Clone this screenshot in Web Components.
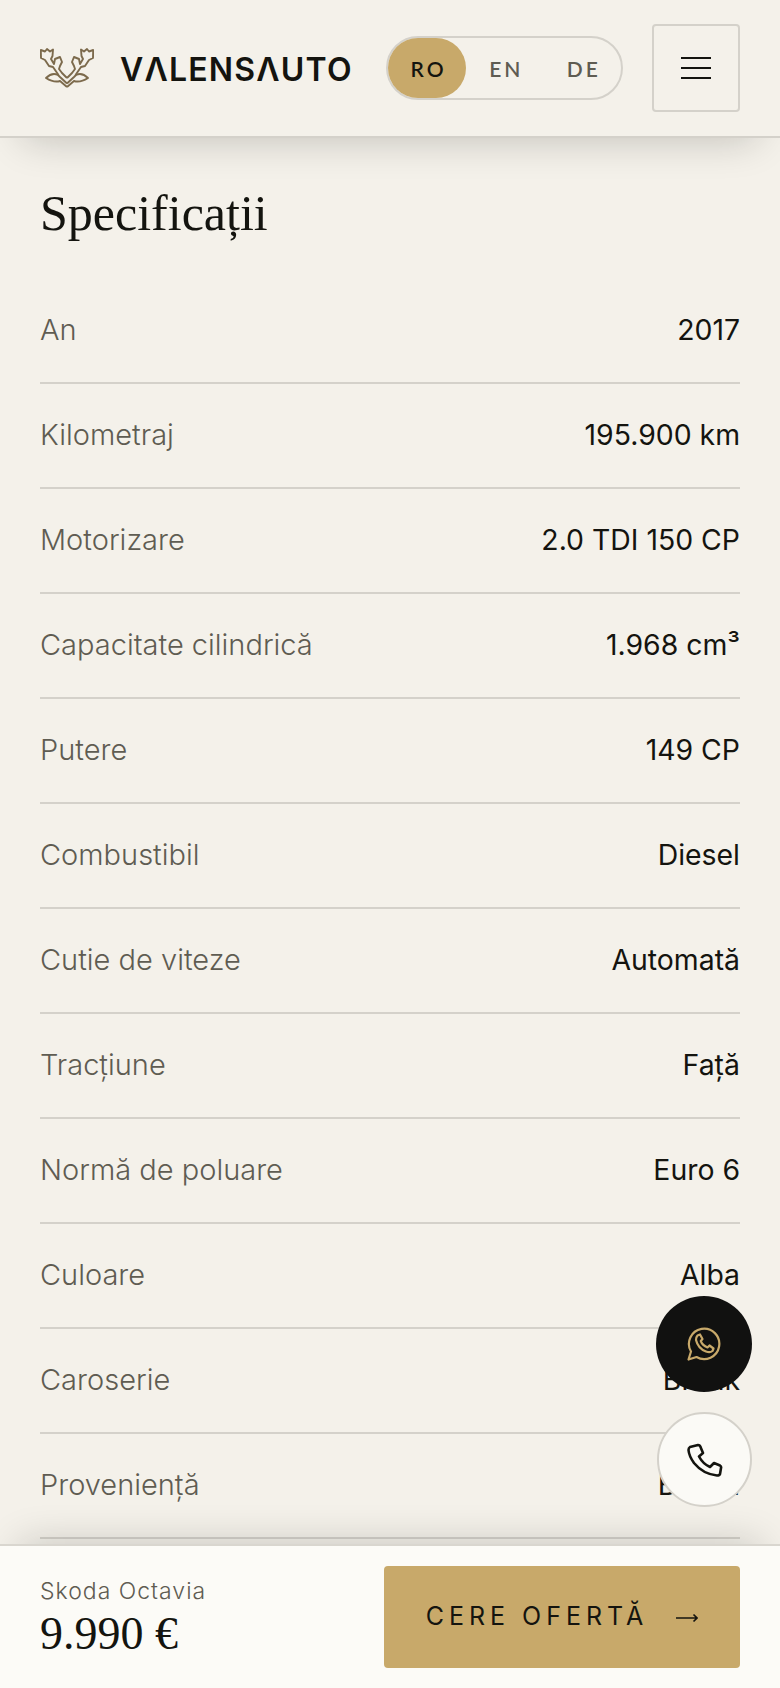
<!DOCTYPE html>
<html lang="ro">
<head>
<meta charset="utf-8">
<title>Specificații</title>
<style>
  html, body { margin: 0; height: 100%; }
  body {
    background: #f4f1ea;
    color: #14140f;
    font-family: "Inter", "Liberation Sans", sans-serif;
    overflow: hidden;
  }
  va-page { height: 100vh; }
</style>
</head>
<body>
<va-page>
  <va-header slot="header"></va-header>
  <va-specs title="Specificații">
    <va-spec label="An" value="2017"></va-spec>
    <va-spec label="Kilometraj" value="195.900 km"></va-spec>
    <va-spec label="Motorizare" value="2.0 TDI 150 CP"></va-spec>
    <va-spec label="Capacitate cilindrică" value="1.968 cm³"></va-spec>
    <va-spec label="Putere" value="149 CP"></va-spec>
    <va-spec label="Combustibil" value="Diesel"></va-spec>
    <va-spec label="Cutie de viteze" value="Automată"></va-spec>
    <va-spec label="Tracțiune" value="Față"></va-spec>
    <va-spec label="Normă de poluare" value="Euro 6"></va-spec>
    <va-spec label="Culoare" value="Alba"></va-spec>
    <va-spec label="Caroserie" value="Break"></va-spec>
    <va-spec label="Proveniență" value="Belgia"></va-spec>
  </va-specs>
  <va-contact slot="float"></va-contact>
  <va-offer-bar slot="footer" name="Skoda Octavia" price="9.990 €"></va-offer-bar>
</va-page>

<script>
class VaPage extends HTMLElement {
  constructor() {
    super();
    this.attachShadow({mode: 'open'}).innerHTML = `
      <style>
        :host { display: flex; flex-direction: column; position: relative; overflow: hidden; }
        main { flex: 1; min-height: 0; overflow: hidden; }
      </style>
      <slot name="header"></slot>
      <main><slot></slot></main>
      <slot name="float"></slot>
      <slot name="footer"></slot>
    `;
  }
}

class VaHeader extends HTMLElement {
  constructor() {
    super();
    this.attachShadow({mode: 'open'}).innerHTML = `
      <style>
        :host {
          display: flex;
          align-items: center;
          flex: none;
          height: 138px;
          box-sizing: border-box;
          padding: 0 40px;
          background: #f4f1ea;
          border-bottom: 2px solid #d4d1ca;
          box-shadow: 0 24px 40px -24px rgba(20, 20, 15, .24);
          position: relative;
          z-index: 2;
        }
        svg.mark { width: 54px; height: 40px; flex: none; }
        .word {
          margin-left: 26px;
          padding-top: 2px;
          font: 600 32px "Inter", sans-serif;
          letter-spacing: 1.2px;
          color: #14140f;
        }
        .langs {
          margin-left: auto;
          display: flex;
          align-items: center;
          box-sizing: border-box;
          width: 237px;
          height: 64px;
          border: 2px solid #d4d1ca;
          border-radius: 32px;
        }
        .langs span {
          flex: 1;
          height: 100%;
          display: flex;
          align-items: center;
          justify-content: center;
          box-sizing: border-box;
          padding-left: 3px;
          font: 600 21px "Lato", sans-serif;
          letter-spacing: 3px;
          color: #5f5c52;
          border-radius: 30px;
        }
        .langs span.on { flex: none; width: 78px; background: #c8a96a; color: #14140f; }
        button {
          margin-left: 29px;
          width: 88px;
          height: 88px;
          background: none;
          border: 2px solid #d4d1ca;
          border-radius: 4px;
          padding: 0;
          display: flex;
          flex-direction: column;
          align-items: center;
          justify-content: center;
          gap: 8px;
        }
        button i { display: block; width: 30px; height: 2px; background: #14140f; }
      </style>
      <svg class="mark" viewBox="0 0 54 40" fill="none" stroke="#7c6a4c" stroke-width="1.9" stroke-linejoin="round">
        <g>
          <path d="M27 39 L20 33 Q14 35 6 30 Q12 24 18 27 L20 29 L27 35.5"/>
          <path d="M18.5 27 L13 19 L9 18 L5 12 L1 10 L0.8 2 L5 3.5 L7 1 L10 3.5 L13 1.5 L12.5 8 L11 11 L14 16 L15 11 L20 9 L22 14 L20 18 L19 21 L22 25 L27 30"/>
        </g>
        <g transform="matrix(-1 0 0 1 54 0)">
          <path d="M27 39 L20 33 Q14 35 6 30 Q12 24 18 27 L20 29 L27 35.5"/>
          <path d="M18.5 27 L13 19 L9 18 L5 12 L1 10 L0.8 2 L5 3.5 L7 1 L10 3.5 L13 1.5 L12.5 8 L11 11 L14 16 L15 11 L20 9 L22 14 L20 18 L19 21 L22 25 L27 30"/>
        </g>
      </svg>
      <span class="word">VΛLENSΛUTO</span>
      <div class="langs"><span class="on">RO</span><span>EN</span><span>DE</span></div>
      <button aria-label="Meniu"><i></i><i></i><i></i></button>
    `;
  }
}

class VaSpecs extends HTMLElement {
  constructor() {
    super();
    this.attachShadow({mode: 'open'}).innerHTML = `
      <style>
        :host { display: block; padding: 0 40px; }
        h2 {
          margin: 0;
          padding-top: 46px;
          height: 95px;
          font: 400 50px/58px "Liberation Serif", serif;
          color: #14140f;
        }
      </style>
      <h2></h2>
      <slot></slot>
    `;
  }
  connectedCallback() {
    this.shadowRoot.querySelector('h2').textContent = this.getAttribute('title');
    this.removeAttribute('title');
  }
}

class VaSpec extends HTMLElement {
  constructor() {
    super();
    this.attachShadow({mode: 'open'}).innerHTML = `
      <style>
        :host {
          display: flex;
          justify-content: space-between;
          align-items: center;
          box-sizing: border-box;
          height: 105px;
          padding-bottom: 2px;
          border-bottom: 2px solid #d4d1ca;
          font: 400 29px "Inter", sans-serif;
        }
        .k { color: #5f5c52; font-weight: 300; }
        .v { color: #14140f; font-size: 28.4px; }
      </style>
      <span class="k"></span><span class="v"></span>
    `;
  }
  connectedCallback() {
    this.shadowRoot.querySelector('.k').textContent = this.getAttribute('label');
    this.shadowRoot.querySelector('.v').textContent = this.getAttribute('value');
  }
}

class VaContact extends HTMLElement {
  constructor() {
    super();
    this.attachShadow({mode: 'open'}).innerHTML = `
      <style>
        :host {
          position: absolute;
          right: 28px;
          bottom: 181px;
          display: flex;
          flex-direction: column;
          align-items: flex-end;
          gap: 20px;
          z-index: 3;
        }
        a {
          width: 96px;
          height: 96px;
          box-sizing: border-box;
          border-radius: 50%;
          display: flex;
          align-items: center;
          justify-content: center;
        }
        .wa { background: #111110; }
        .tel { width: 95px; height: 95px; background: #fbfaf6; border: 2px solid #d4d1ca; }
      </style>
      <a class="wa">
        <svg width="34" height="34" viewBox="0 0 34 34" fill="none" stroke="#c8a96a" stroke-width="2.2" stroke-linejoin="round" stroke-linecap="round">
          <path d="M1.5 32.5 L4 24.5 A15.2 15.2 0 1 1 9.5 30 Z"/>
          <path d="M10.5 8.5 L13 7.5 L15.5 12 L13.8 14 Q15.5 18.5 20.5 20.5 L22.5 18.5 L26.5 21.5 L25.5 24 Q23 26 19 24.5 Q11 21.5 9 13 Q8.8 10.5 10.5 8.5 Z"/>
        </svg>
      </a>
      <a class="tel">
        <svg width="36" height="34" viewBox="0 0 36 34" fill="none" stroke="#14140f" stroke-width="2.6" stroke-linejoin="round" stroke-linecap="round">
          <path d="M3 4 L11 2 Q13 2 13.5 4 L16 10 L12 13.5 Q16 21 23 24 L27 20 L33 22.5 Q34.5 23.5 34 25 L33 31 Q32.5 32.5 30 32.5 Q16 31 7 20 Q2 13 1.5 7 Q1.5 5 3 4 Z"/>
        </svg>
      </a>
    `;
  }
}

class VaOfferBar extends HTMLElement {
  constructor() {
    super();
    this.attachShadow({mode: 'open'}).innerHTML = `
      <style>
        :host {
          display: flex;
          align-items: center;
          justify-content: space-between;
          flex: none;
          height: 144px;
          box-sizing: border-box;
          padding: 0 40px;
          background: #fcfbf7;
          border-top: 2px solid #d9d6cf;
          box-shadow: 0 -20px 40px -20px rgba(20, 20, 15, .2);
          position: relative;
          z-index: 2;
        }
        .name {
          font: 300 23px/30px "Inter", sans-serif;
          letter-spacing: 1px;
          color: #5f5c52;
        }
        .price {
          margin-top: 4px;
          font: 400 46px/48px "Liberation Serif", serif;
          color: #14140f;
        }
        a {
          width: 356px;
          height: 102px;
          box-sizing: border-box;
          background: #c8a96a;
          border-radius: 4px;
          display: flex;
          align-items: center;
          justify-content: center;
          gap: 28px;
          padding-bottom: 2px;
          font: 400 25px "Inter", sans-serif;
          letter-spacing: 5px;
          color: #14140f;
        }
        svg { width: 22px; height: 10px; margin-top: 4px; }
      </style>
      <div>
        <div class="name"></div>
        <div class="price"></div>
      </div>
      <a>CERE OFERTĂ
        <svg viewBox="0 0 22 10" fill="none" stroke="#14140f" stroke-width="1.6"><path d="M0 5 H21 M17.5 1.5 L21 5 L17.5 8.5"/></svg>
      </a>
    `;
  }
  connectedCallback() {
    this.shadowRoot.querySelector('.name').textContent = this.getAttribute('name');
    this.shadowRoot.querySelector('.price').textContent = this.getAttribute('price');
  }
}

customElements.define('va-page', VaPage);
customElements.define('va-header', VaHeader);
customElements.define('va-specs', VaSpecs);
customElements.define('va-spec', VaSpec);
customElements.define('va-contact', VaContact);
customElements.define('va-offer-bar', VaOfferBar);
</script>
</body>
</html>
